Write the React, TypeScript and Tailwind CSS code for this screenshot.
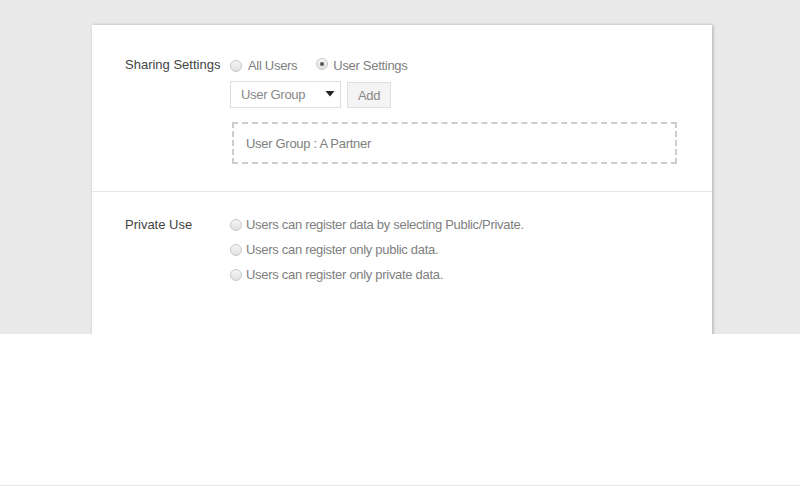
import React from "react";

function Radio({ checked = false }: { checked?: boolean }) {
  return (
    <span className="relative inline-block w-[12px] h-[12px] rounded-full border border-[#c8c8c8] bg-[linear-gradient(#f6f6f6,#e0e0e0)] shrink-0">
      {checked && (
        <span className="absolute left-[3px] top-[3px] w-[4px] h-[4px] rounded-full bg-[#555]" />
      )}
    </span>
  );
}

export default function App() {
  return (
    <div className="w-[800px] h-[486px] bg-white font-['Liberation_Sans',Arial,sans-serif] text-[13px] tracking-[-0.3px]">
      <div className="h-[334px] bg-[#e9e9e9] overflow-hidden pt-[25px] pl-[92px]">
        <div className="w-[620px] h-[320px] bg-white shadow-[1px_0_3px_rgba(0,0,0,0.25)]">
          <div className="flex pl-[33px] pr-[34px] pt-[31px] pb-[27px] border-b border-[#e6e6e6]">
            <div className="w-[105px] h-[18px] leading-[18px] text-[#444] tracking-normal">Sharing Settings</div>
            <div className="flex-1 flex flex-col">
              <div className="flex items-center h-[18px] mt-[1px] text-[#808080]">
                <Radio />
                <span className="ml-[6px]">All Users</span>
                <span className="ml-[19px]"><Radio checked /></span>
                <span className="ml-[5px]">User Settings</span>
              </div>
              <div className="flex mt-[6px] h-[27px]">
                <div className="w-[111px] h-[27px] border border-[#ddd] flex items-center justify-between pl-[10px] pr-[5px] text-[#888]">
                  <span className="mt-[1px]">User Group</span>
                  <svg width="10" height="6" viewBox="0 0 10 6" className="mt-[-1px]"><path d="M0.5 0h9L5 5.5z" fill="#222" /></svg>
                </div>
                <div className="ml-[6px] w-[44px] h-[26px] mt-[1px] border border-[#e0e0e0] bg-[#f4f4f4] flex items-center justify-center text-[#888]">
                  <span className="mt-[1px]">Add</span>
                </div>
              </div>
              <div className="mt-[14px] ml-[2px] w-[445px] h-[42px] border-2 border-dashed border-[#cdcdcd] flex items-center pl-[12px] text-[#808080]">
                <span className="mt-[2px]">User Group : A Partner</span>
              </div>
            </div>
          </div>
          <div className="flex pl-[33px] pt-[20px]">
            <div className="w-[105px] h-[25px] leading-[25px] text-[#444] tracking-normal">Private Use</div>
            <div className="flex flex-col text-[#808080]">
              {[
                "Users can register data by selecting Public/Private.",
                "Users can register only public data.",
                "Users can register only private data.",
              ].map((t) => (
                <div key={t} className="flex items-center h-[25px]">
                  <Radio />
                  <span className="ml-[4px] mt-[1px]">{t}</span>
                </div>
              ))}
            </div>
          </div>
        </div>
      </div>
      <div className="h-[151px]" />
      <div className="h-[1px] bg-[#e6e6e6]" />
    </div>
  );
}
